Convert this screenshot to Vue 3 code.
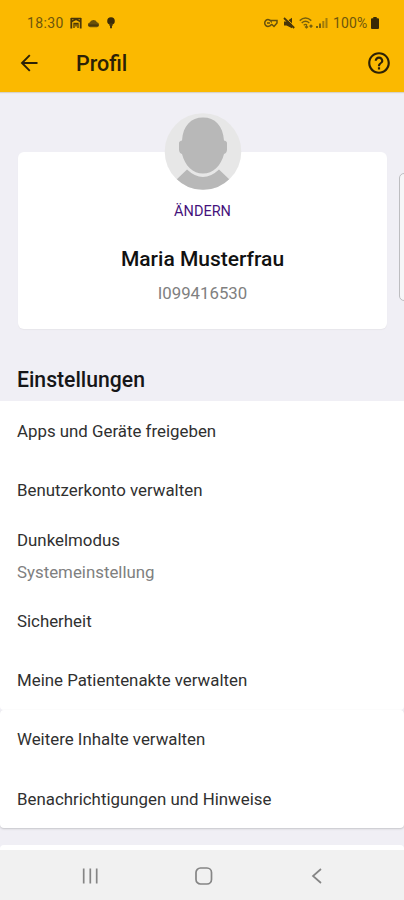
<script setup>
const accountItems = [
  { title: 'Apps und Geräte freigeben' },
  { title: 'Benutzerkonto verwalten' },
  { title: 'Dunkelmodus', detail: 'Systemeinstellung' },
  { title: 'Sicherheit' },
  { title: 'Meine Patientenakte verwalten' }
]
const contentItems = [
  { title: 'Weitere Inhalte verwalten' },
  { title: 'Benachrichtigungen und Hinweise' }
]
</script>

<template>
  <div class="screen">
    <header class="top">
      <div class="status">
        <div class="status-group">
          <span class="clock">18:30</span>
          <svg class="ic-app" width="12" height="12" viewBox="0 0 12 12" fill="none" stroke="#4a3608">
            <path d="M1.300 11.500V1M10.700 11.500V1" stroke-width="1.800" />
            <path d="M1 1.500H11M1.500 4.500L6 2.200l4.500 2.300" stroke-width="1.600" />
            <path d="M4 11V6.500H8V11M6 6v3.500" stroke-width="1.300" />
          </svg>
          <svg class="ic-cloud" width="13" height="9" viewBox="0 0 13 9">
            <path d="M3 8.200a2.400 2.400 0 0 1-.3-4.700A4 4 0 0 1 10 3.300a2.500 2.500 0 0 1 0 4.900z" fill="#695009" />
            <path d="M1.500 6.200h10" stroke="#49370a" stroke-width="1.500" />
          </svg>
          <svg class="ic-bulb" width="8" height="12" viewBox="0 0 8 12">
            <circle cx="4" cy="4" r="3.800" fill="#3c2c08" />
            <path d="M2.500 6h3v3h-3zM3 9h2v2.300H3z" fill="#49370a" />
          </svg>
        </div>
        <div class="status-group">
          <svg class="ic-key" width="15" height="10" viewBox="0 0 15 10" fill="none" stroke="#65500d" stroke-width="1.500">
            <path d="M8 3.200A3.400 3.400 0 1 0 8 6.800l1-.3 2 2 3-3.500V2.500H8z" />
            <path d="M4 5h3" />
          </svg>
          <svg class="ic-mute" width="12" height="12" viewBox="0 0 12 12">
            <path d="M1 4.500h2.500L9 .8v10.400L3.500 8.500H1z" fill="#49370a" />
            <path d="M1.500 0l10.500 9.500" stroke="#fbb900" stroke-width="1" />
            <path d="M1 1l10.200 10" stroke="#49370a" stroke-width="1.800" />
          </svg>
          <svg class="ic-wifi" width="15" height="12" viewBox="0 0 15 12" fill="none" stroke="#76600d" stroke-width="1.400">
            <path d="M.7 3.600Q6.500-1.400 12.300 3.600M2.700 6Q6.500 2.700 10.300 6M4.700 8.200Q6.500 6.700 8 8" />
            <path d="M7.500 8v3M6 9.500l1.500 1.500L9 9.500M12 11V8M10.500 9.500L12 8l1.500 1.500" stroke-width="1.200" />
          </svg>
          <svg class="ic-signal" width="12" height="12" viewBox="0 0 12 12">
            <path d="M0 9h2v2H0zM3 6.500h2V11H3z" fill="#76600d" />
            <path d="M6.300 4h2v7h-2zM9.500 1h2v10h-2z" fill="#a07c0b" />
          </svg>
          <span class="percent">100%</span>
          <svg class="ic-battery" width="8" height="12" viewBox="0 0 8 12">
            <path d="M2.300 0h3.400v1.300H7q1 0 1 1V11q0 1-1 1H1q-1 0-1-1V2.300q0-1 1-1h1.300z" fill="#392a06" />
          </svg>
        </div>
      </div>
      <div class="appbar">
        <svg class="back" width="18" height="18" viewBox="0 0 18 18" fill="none" stroke="#2c2106" stroke-width="1.900">
          <path d="M17.500 9H2.500M9.800 1.200L2 9l7.800 7.800" />
        </svg>
        <h1>Profil</h1>
        <svg class="help" width="26" height="26" viewBox="0 0 24 24" fill="#2c2106">
          <path d="M11 18h2v-2h-2v2zm1-16C6.480 2 2 6.480 2 12s4.480 10 10 10 10-4.480 10-10S17.520 2 12 2zm0 18c-4.410 0-8-3.590-8-8s3.590-8 8-8 8 3.590 8 8-3.590 8-8 8zm0-14c-2.210 0-4 1.790-4 4h2c0-1.100.9-2 2-2s2 .9 2 2c0 2-3 1.750-3 5h2c0-2.250 3-2.500 3-5 0-2.210-1.790-4-4-4z" />
        </svg>
      </div>
    </header>

    <main>
      <section class="profile">
        <svg class="avatar" width="78" height="78" viewBox="0 0 78 78">
          <defs>
            <clipPath id="avatar-clip"><circle cx="39" cy="38.500" r="38.300" /></clipPath>
          </defs>
          <g clip-path="url(#avatar-clip)">
            <rect width="78" height="78" fill="#e7e7e7" />
            <path d="M23 56.500Q39 71.500 55 56.500L66 67V78H12V67z" fill="#b8b8b8" />
            <path d="M39 4.500C51 4.500 59 12.500 60 27.500Q63.500 28 63 31V37Q62.500 40.500 60 41C57 53 49 60.500 39 60.500S21 53 18 41Q15.500 40.500 15 37V31Q14.500 28 18 27.500C19 12.500 27 4.500 39 4.500z" fill="#b8b8b8" />
          </g>
        </svg>
        <a class="change">ÄNDERN</a>
        <h2 class="name">Maria Musterfrau</h2>
        <p class="number">I099416530</p>
        <div class="edge-handle"></div>
      </section>

      <h2 class="section-title">Einstellungen</h2>
      <ul class="list first">
        <li v-for="item in accountItems" :key="item.title" :class="{ double: item.detail }">
          <span>{{ item.title }}</span>
          <span v-if="item.detail" class="detail">{{ item.detail }}</span>
        </li>
      </ul>
      <ul class="list second">
        <li v-for="item in contentItems" :key="item.title"><span>{{ item.title }}</span></li>
      </ul>
      <div class="next-card"></div>
    </main>

    <nav class="navbar">
      <svg width="18" height="18" viewBox="0 0 18 18" stroke="#858585" stroke-width="1.700">
        <path d="M1.700 1.500v15M8.300 1.500v15M14.700 1.500v15" />
      </svg>
      <svg width="18" height="18" viewBox="0 0 18 18" fill="none" stroke="#858585" stroke-width="1.700">
        <rect x="1" y="1" width="15.500" height="16" rx="4.500" />
      </svg>
      <svg width="18" height="18" viewBox="0 0 18 18" fill="none" stroke="#858585" stroke-width="1.700">
        <path d="M13 2L5 9l8 7" />
      </svg>
    </nav>
  </div>
</template>

<style>
body { background: #f0eff5; }
</style>

<style scoped>
.screen {
  display: flex;
  flex-direction: column;
  width: 404px;
  height: 900px;
  overflow: hidden;
  background: #f0eff5;
  color: #303030;
  font-family: Roboto, "Liberation Sans", sans-serif;
}
h1, h2, p, ul { margin: 0; padding: 0; }
svg { display: block; flex: none; }
.top {
  height: 92px;
  flex: none;
  background: #fbb900;
  box-shadow: 0 1px 1px #d8d3ca;
}
.status {
  display: flex;
  justify-content: space-between;
  height: 46px;
  padding: 0 25px 0 27px;
  color: #6e560c;
  font-size: 14px;
}
.status-group { display: flex; align-items: center; }
.clock { width: 42.500px; letter-spacing: .4px; }
.ic-cloud { margin-left: 5px; }
.ic-bulb { margin-left: 7px; }
.ic-mute { margin-left: 5px; }
.ic-wifi { margin-left: 4px; }
.ic-signal { margin-left: 2px; }
.percent { width: 35px; margin-left: 5px; letter-spacing: .1px; }
.ic-battery { margin-left: 3px; }
.appbar {
  display: flex;
  align-items: center;
  height: 33px;
  padding: 0 12.500px 0 20px;
}
h1 {
  flex: 1;
  margin-left: 38px;
  padding-top: 2px;
  color: #2c2106;
  font-size: 21.500px;
  font-weight: 500;
  line-height: 33px;
}
main { flex: none; height: 758px; overflow: hidden; }
.profile {
  position: relative;
  display: flex;
  flex-direction: column;
  align-items: center;
  height: 177px;
  margin: 60px 17px 0 18px;
  border-radius: 6px;
  background: #fff;
  box-shadow: 0 1px 1px #e7e6eb;
}
.avatar { margin-top: -39px; }
.change {
  margin-top: 12px;
  color: #45127c;
  font-size: 14.500px;
  line-height: 18px;
}
.name {
  margin-top: 24px;
  color: #111;
  font-size: 21px;
  font-weight: 500;
  line-height: 28px;
}
.number {
  margin-top: 9px;
  color: #808080;
  font-size: 16.800px;
  line-height: 22px;
}
.edge-handle {
  position: absolute;
  left: 381px;
  top: 21px;
  width: 14px;
  height: 126px;
  border: 1px solid #bdbdc0;
  border-radius: 5px;
  background: #f6f6f8;
}
.section-title {
  height: 72px;
  padding: 37px 17px 0;
  box-sizing: border-box;
  color: #161618;
  font-size: 21.200px;
  font-weight: 500;
  line-height: 28px;
}
.list {
  list-style: none;
  background: #fff;
  font-size: 16.850px;
}
.list.first { height: 308.500px; border-radius: 0 0 4px 4px; }
.list.second {
  height: 118.500px;
  border-radius: 4px;
  box-shadow: 0 1px 2px #c5c5c9;
}
li {
  display: flex;
  flex-direction: column;
  justify-content: center;
  box-sizing: border-box;
  height: 59.400px;
  padding: .4px 17px 0;
  line-height: 20px;
}
.double { height: 71px; padding-top: 1px; gap: 12px; }
.detail { color: #808080; }
.next-card { height: 10px; margin-top: 17px; background: #fff; border-radius: 4px 4px 0 0; }
.navbar {
  display: flex;
  flex: none;
  align-items: center;
  justify-content: space-between;
  box-sizing: border-box;
  height: 50px;
  padding: 2px 78px 0 82px;
  background: #f1f1f1;
}
</style>
